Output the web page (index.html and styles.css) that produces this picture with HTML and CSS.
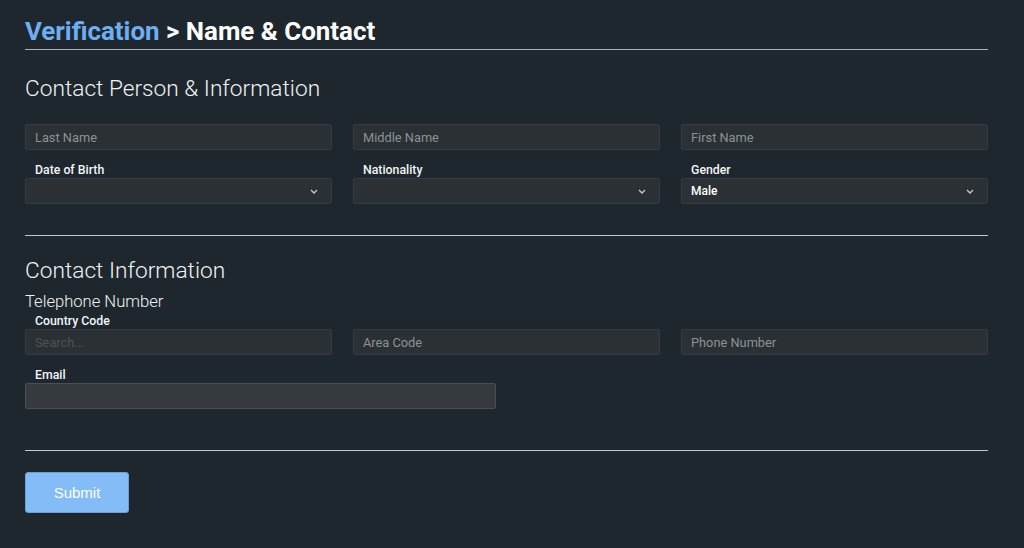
FILE: index.html
```html
<!DOCTYPE html>
<html>
<head>
<meta charset="utf-8">
<link rel="stylesheet" href="styles.css">
</head>
<body>
<div class="page">
  <h1 class="title"><span class="crumb">Verification</span> &gt; Name &amp; Contact</h1>

  <h2 class="section">Contact Person &amp; Information</h2>
  <div class="grid3 grid-person">
    <div class="input"><span class="ph">Last Name</span></div>
    <div class="input"><span class="ph">Middle Name</span></div>
    <div class="input"><span class="ph">First Name</span></div>
    <div class="field">
      <div class="label">Date of Birth</div>
      <div class="input select"><span class="val"></span><svg class="chev" viewBox="0 0 8 5" width="8" height="5"><path d="M1 1 L4 4 L7 1" fill="none" stroke="#c9cdd1" stroke-width="1.3"/></svg></div>
    </div>
    <div class="field">
      <div class="label">Nationality</div>
      <div class="input select"><span class="val"></span><svg class="chev" viewBox="0 0 8 5" width="8" height="5"><path d="M1 1 L4 4 L7 1" fill="none" stroke="#c9cdd1" stroke-width="1.3"/></svg></div>
    </div>
    <div class="field">
      <div class="label">Gender</div>
      <div class="input select"><span class="val">Male</span><svg class="chev" viewBox="0 0 8 5" width="8" height="5"><path d="M1 1 L4 4 L7 1" fill="none" stroke="#c9cdd1" stroke-width="1.3"/></svg></div>
    </div>
  </div>

  <hr class="rule rule-1">

  <h2 class="section section-2">Contact Information</h2>
  <div class="sub">Telephone Number</div>
  <div class="grid3">
    <div class="field">
      <div class="label">Country Code</div>
      <div class="input"><span class="ph dim">Search...</span></div>
    </div>
    <div class="field field-end">
      <div class="input"><span class="ph">Area Code</span></div>
    </div>
    <div class="field field-end">
      <div class="input"><span class="ph">Phone Number</span></div>
    </div>
  </div>
  <div class="grid2">
    <div class="field email">
      <div class="label">Email</div>
      <div class="input input-light"></div>
    </div>
  </div>

  <hr class="rule rule-2">

  <button class="submit">Submit</button>
</div>
</body>
</html>
```

FILE: styles.css
```css
html, body {
  margin: 0;
  padding: 0;
  background: #1e272e;
}
body {
  font-family: Roboto, "Liberation Sans", sans-serif;
  color: #f2f4f5;
  width: 1024px;
  height: 548px;
  overflow: hidden;
}
.page {
  width: 963px;
  padding: 16px 0 0 25px;
}
.title {
  margin: 0;
  font-size: 25.9px;
  line-height: 30px;
  font-weight: 700;
  color: #ffffff;
  padding-bottom: 3px;
  border-bottom: 1px solid #aeb3b7;
}
.crumb {
  color: #6eaef2;
}
.section {
  margin: 26px 0 0 0;
  font-size: 22.7px;
  line-height: 26px;
  font-weight: 300;
  color: #f0f2f3;
}
.section-2 {
  margin-top: 22px;
}
.sub {
  margin: 8px 0 1px 0;
  font-size: 16.6px;
  line-height: 20px;
  font-weight: 300;
  color: #f0f2f3;
}
.grid3 {
  display: grid;
  grid-template-columns: repeat(3, 1fr);
  column-gap: 21px;
  row-gap: 12px;
}
.grid-person {
  margin-top: 22px;
}
.grid2 {
  display: grid;
  grid-template-columns: repeat(2, 1fr);
  column-gap: 21px;
  margin-top: 12px;
}
.field {
  display: flex;
  flex-direction: column;
}
.field-end {
  justify-content: flex-end;
}
.label {
  font-size: 12.3px;
  line-height: 16px;
  font-weight: 500;
  color: #f4f6f7;
  padding-left: 10px;
}
.input {
  box-sizing: border-box;
  height: 26px;
  background: #2a3034;
  border: 1px solid #363c41;
  border-radius: 2px;
  display: flex;
  align-items: center;
  padding: 0 9px;
}
.input-light {
  background: #363a3e;
  border-color: #4a4f54;
}
.ph {
  font-size: 12.8px;
  color: #8c9297;
}
.ph.dim {
  color: #4b5359;
}
.select {
  justify-content: space-between;
  padding-right: 13px;
}
.val {
  font-size: 12px;
  font-weight: 500;
  color: #ffffff;
}
.chev {
  display: block;
  margin-top: 1px;
}
.rule {
  border: 0;
  border-top: 1px solid #c4c8cb;
  margin: 0;
}
.rule-1 {
  margin-top: 31px;
}
.rule-2 {
  margin-top: 41px;
}
.submit {
  margin-top: 21px;
  width: 104px;
  height: 41px;
  background: #83bcf6;
  border: 1px solid #6f9fcf;
  border-radius: 3px;
  color: #ffffff;
  font-family: "Liberation Sans", Arial, sans-serif;
  font-size: 15px;
  padding: 0;
}
```
